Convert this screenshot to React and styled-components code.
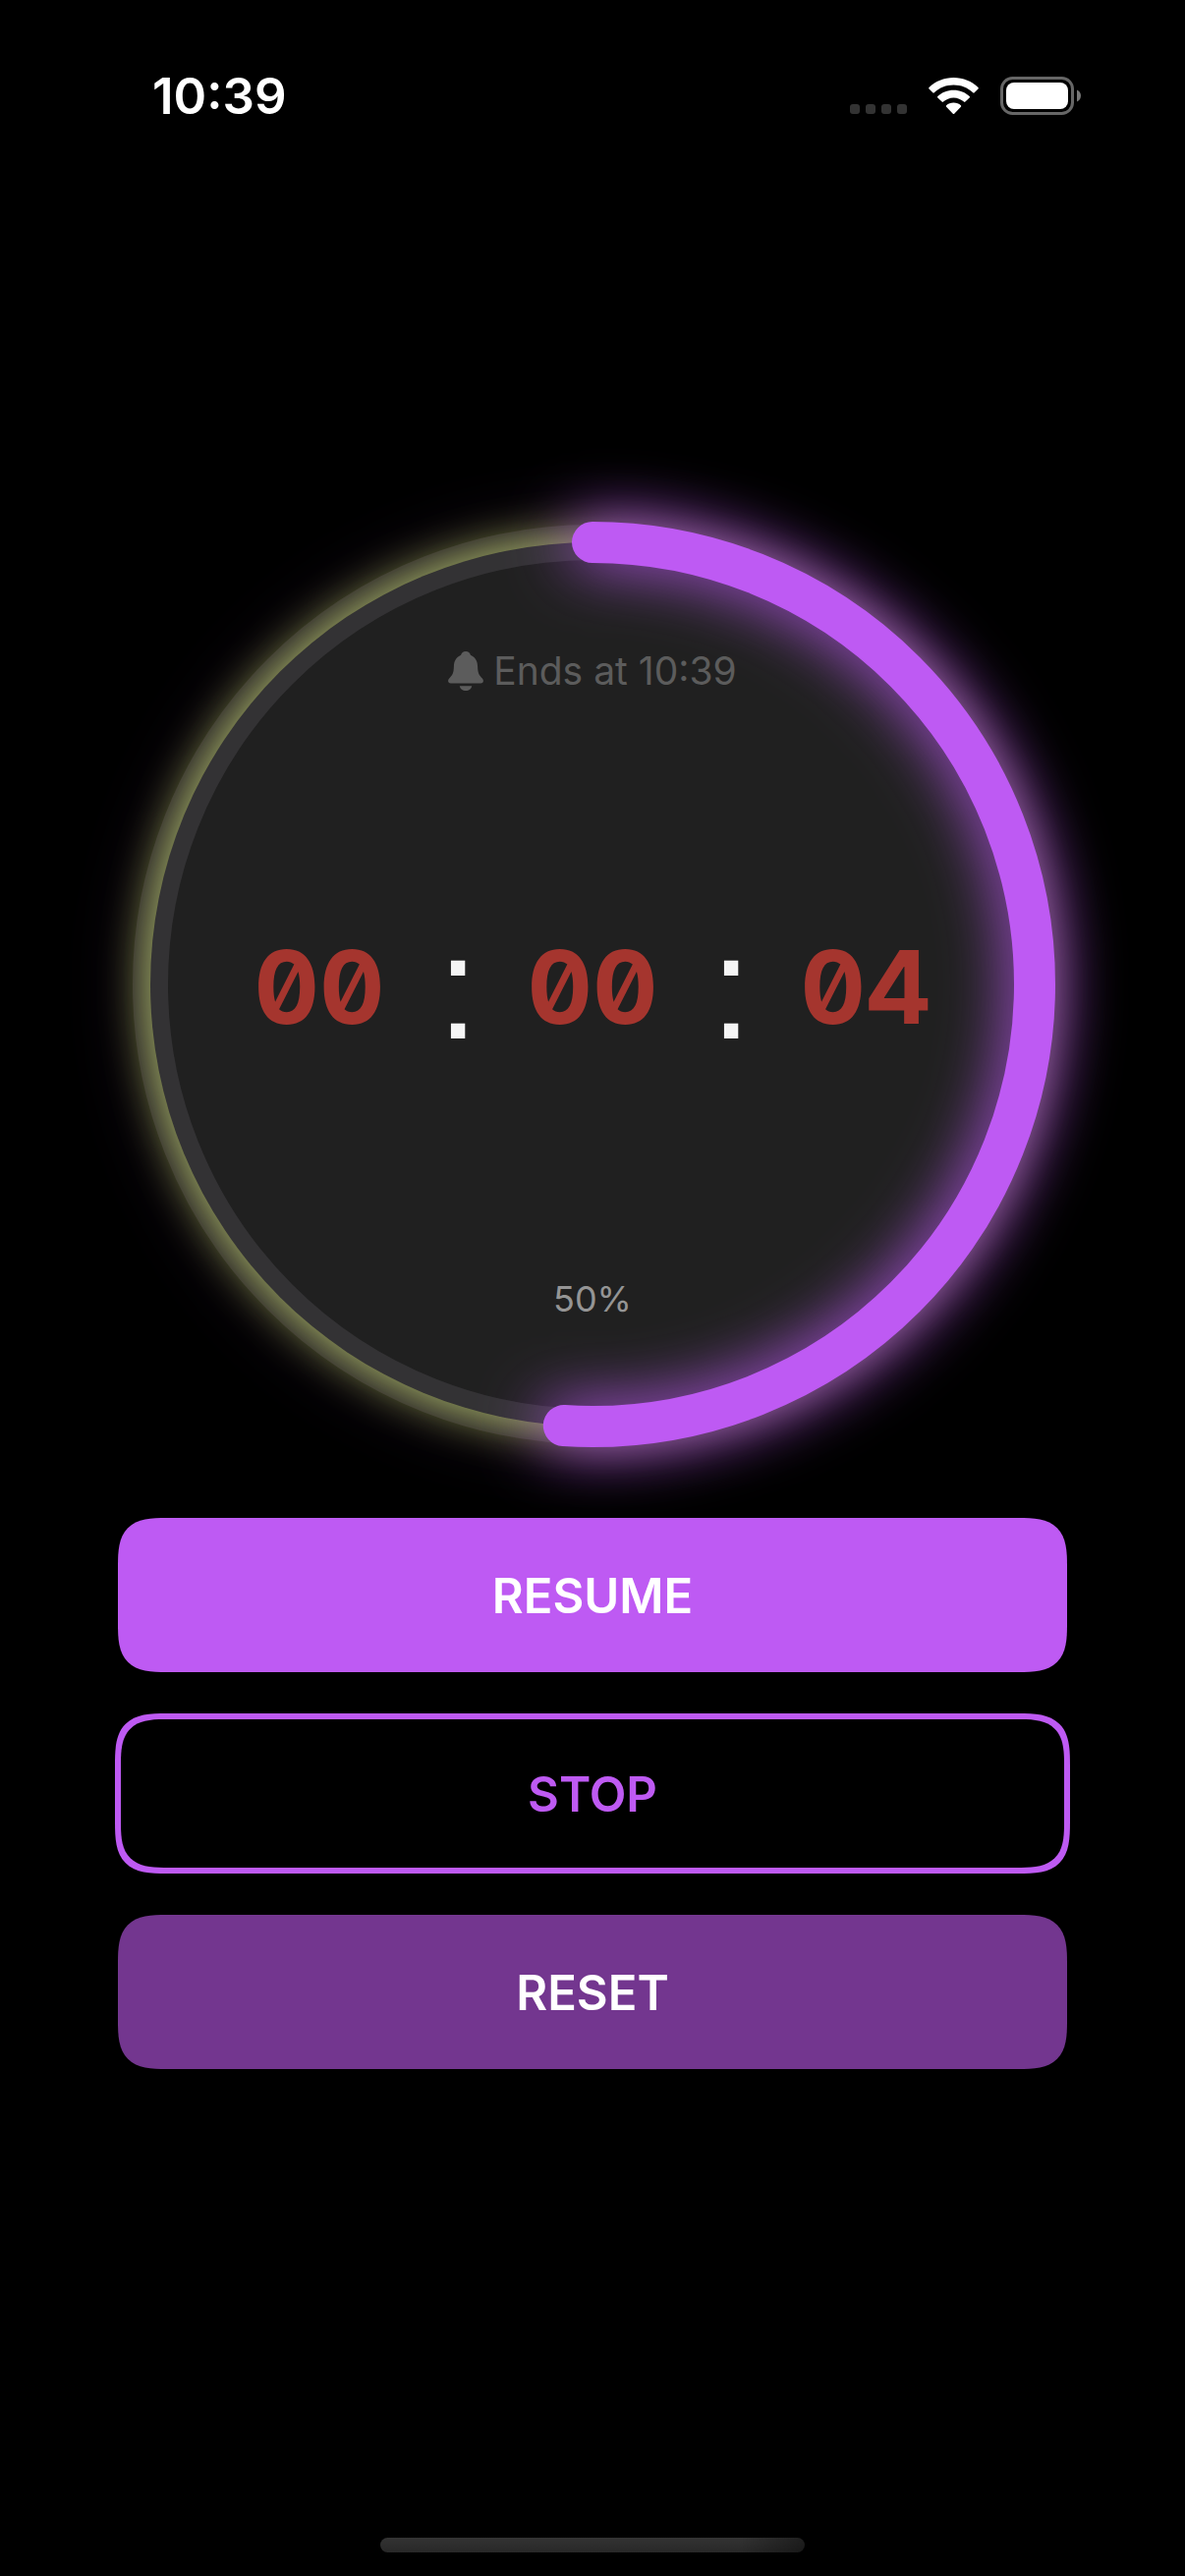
import React from "react";
import styled, { createGlobalStyle } from "styled-components";

const purple = "#be5af3";
const sans = `Inter, "Liberation Sans", sans-serif`;

const GlobalStyle = createGlobalStyle`
  *, *::before, *::after { box-sizing: border-box; }
  html, body { margin: 0; background: #000; }
  body { font-family: ${sans}; color: #fff; }
`;

const Screen = styled.div`
  min-height: 100vh;
  display: flex;
  flex-direction: column;
  background: #000;
  overflow: hidden;
`;

const StatusBar = styled.header`
  display: flex;
  align-items: center;
  justify-content: space-between;
  padding: 68px 106px 0 155px;
`;

const Clock = styled.time`
  font-size: 51px;
  line-height: 60px;
  font-weight: 600;
`;

const StatusIcons = styled.div`
  display: flex;
  align-items: flex-end;
  gap: 22px;

  svg { display: block; }
`;

const Main = styled.main`
  flex: 1;
  display: flex;
  flex-direction: column;
  gap: 72px;
  padding: 403px 120px 0;
`;

const Dial = styled.section`
  display: grid;
  margin: 0 12px;
  aspect-ratio: 1;

  > * { grid-area: 1 / 1; }
`;

const Ring = styled.svg`
  display: block;
  width: 100%;
  height: 100%;
  overflow: visible;
`;

const DialContent = styled.div`
  display: flex;
  flex-direction: column;
  align-items: center;
  justify-content: space-between;
  padding: 128px 0 127px;
  z-index: 1;
`;

const EndsAt = styled.p`
  display: flex;
  align-items: center;
  gap: 10px;
  margin: 0;
  font-size: 39px;
  line-height: 48px;
  color: #5c5c5c;
`;

const Percent = styled.p`
  margin: 0;
  font-size: 36px;
  line-height: 48px;
  color: #959595;
`;

const Countdown = styled.div`
  display: grid;
  grid-template-columns: 132px 146px 132px 146px 132px;
  align-items: center;
  justify-items: center;
  padding-top: 4px;
  line-height: 120px;
`;

const Digits = styled.span`
  font-size: 103px;
  font-weight: 700;
  font-feature-settings: "tnum", "zero";
  color: #a5352e;
`;

const Colon = styled.span`
  padding-left: 4px;
  font-family: "Liberation Sans", Arial, sans-serif;
  font-size: 150px;
  color: #f5f5f5;
`;

const Actions = styled.div`
  display: flex;
  flex-direction: column;
  gap: 45px;
`;

const ActionButton = styled.button`
  height: 157px;
  padding: 2px 0 0;
  border: 0;
  border-radius: 38px;
  background: ${(p) => p.$fill || "transparent"};
  color: ${(p) => p.$ink || "#fff"};
  outline: ${(p) => (p.$outlined ? `6px solid ${purple}` : "none")};
  outline-offset: -3px;
  font-family: inherit;
  font-size: 49px;
  line-height: 60px;
  font-weight: 600;

  @supports (corner-shape: superellipse(1.6)) {
    border-radius: 50px;
    corner-shape: superellipse(1.6);
  }
`;

const HomeBar = styled.footer`
  display: flex;
  justify-content: center;
  padding-bottom: 24px;

  &::after {
    content: "";
    width: 432px;
    height: 15px;
    border-radius: 8px;
    background:
      linear-gradient(90deg, transparent 85%, rgba(0, 0, 0, 0.4)),
      linear-gradient(#333, #282828);
  }
`;

const PROGRESS = 0.5103;
const R = 450;
const LENGTH = 2 * Math.PI * R;

function ProgressRing() {
  return (
    <Ring viewBox="0 0 942 942" aria-hidden="true">
      <defs>
        <filter id="soft" x="-200" y="-200" width="1342" height="1342" filterUnits="userSpaceOnUse" colorInterpolationFilters="sRGB">
          <feGaussianBlur stdDeviation="25" />
        </filter>
        <filter id="glow" x="-200" y="-200" width="1342" height="1342" filterUnits="userSpaceOnUse" colorInterpolationFilters="sRGB">
          <feGaussianBlur stdDeviation="32" />
        </filter>
      </defs>
      <circle cx="471" cy="471" r={R} fill="#c8e85c" filter="url(#soft)" />
      <circle cx="471" cy="471" r={R} fill="none" stroke={purple} strokeOpacity="0.16" strokeWidth="36" filter="url(#glow)" />
      <circle cx="471" cy="471" r={R} fill="#202020" />
      <circle cx="471" cy="471" r={R} fill="none" stroke="#aca4b2" strokeOpacity="0.14" strokeWidth="36" />
      <g transform="rotate(-90 471 471)" fill="none" stroke={purple} strokeWidth="42" strokeLinecap="round">
        <circle cx="471" cy="471" r={R} strokeDasharray={`${LENGTH * PROGRESS} ${LENGTH}`} filter="url(#glow)" />
        <circle cx="471" cy="471" r={R} strokeDasharray={`${LENGTH * PROGRESS} ${LENGTH}`} />
      </g>
    </Ring>
  );
}

function CellularIcon() {
  return (
    <svg width="58" height="12" viewBox="0 0 58 12" fill="#333" aria-hidden="true">
      {[0, 16, 32, 48].map((x) => (
        <rect key={x} x={x} y="0" width="10" height="10" rx="3" />
      ))}
    </svg>
  );
}

function WifiIcon() {
  return (
    <svg width="51" height="39" viewBox="0 0 51 39" fill="#fff" aria-hidden="true">
      <path d="M25.500 0C35.200 0 44.200 3.700 50.500 10Q51.200 10.800 50.500 11.500L46.700 15.300Q46 16 45.200 15.300C39.900 10.300 32.900 7.600 25.500 7.600S11.100 10.300 5.800 15.300Q5 16 4.300 15.300L.5 11.500Q-.2 10.800 .5 10C6.800 3.700 15.800 0 25.500 0Z" />
      <path d="M25.500 12.700C31.800 12.700 37.600 15 41.700 19Q42.400 19.700 41.700 20.400L37.400 24.600Q36.700 25.200 36 24.600C33.200 22 29.500 20.400 25.500 20.400S17.800 22 15 24.600Q14.300 25.200 13.600 24.600L9.300 20.400Q8.600 19.700 9.300 19C13.400 15 19.200 12.700 25.500 12.700Z" />
      <path d="M25.500 25.500C28.400 25.500 31 26.500 32.900 28.300Q33.600 29 32.900 29.700L26.200 36.700Q25.500 37.400 24.800 36.700L18.100 29.700Q17.400 29 18.100 28.300C20 26.500 22.600 25.500 25.500 25.500Z" />
    </svg>
  );
}

function BatteryIcon() {
  return (
    <svg width="82" height="40" viewBox="0 0 82 40" aria-hidden="true">
      <rect x="1.500" y="1.500" width="72" height="36" rx="11" fill="none" stroke="#666" strokeWidth="3" />
      <rect x="6" y="6" width="63" height="27" rx="8" fill="#fff" />
      <path d="M78 13.500C80.400 14.500 82 16.800 82 19.500S80.400 24.500 78 25.500Z" fill="#777" />
    </svg>
  );
}

function BellIcon() {
  return (
    <svg width="36" height="40" viewBox="0 0 36 40" fill="#5c5c5c" aria-hidden="true">
      <path d="M18 0C20.500 0 22.300 1.500 22.900 3.800C27.800 6 30.100 10.400 30.100 15.600C30.300 22.200 31.500 24.200 34.800 27.500C36.800 29.700 36 32.500 33.300 32.500H2.700C0 32.500-.8 29.700 1.200 27.500C4.500 24.200 5.700 22.200 5.900 15.600C5.900 10.400 8.200 6 13.100 3.800C13.700 1.500 15.500 0 18 0Z" />
      <path d="M11.800 35.200H24.200C23.800 38 21.300 40 18 40S12.200 38 11.800 35.200Z" />
    </svg>
  );
}

export default function App() {
  return (
    <Screen>
      <GlobalStyle />
      <StatusBar>
        <Clock>10:39</Clock>
        <StatusIcons>
          <CellularIcon />
          <WifiIcon />
          <BatteryIcon />
        </StatusIcons>
      </StatusBar>
      <Main>
        <Dial>
          <ProgressRing />
          <DialContent>
            <EndsAt>
              <BellIcon />
              Ends at 10:39
            </EndsAt>
            <Countdown role="timer">
              <Digits>00</Digits>
              <Colon>:</Colon>
              <Digits>00</Digits>
              <Colon>:</Colon>
              <Digits>04</Digits>
            </Countdown>
            <Percent>50%</Percent>
          </DialContent>
        </Dial>
        <Actions>
          <ActionButton type="button" $fill={purple}>RESUME</ActionButton>
          <ActionButton type="button" $outlined $ink={purple}>STOP</ActionButton>
          <ActionButton type="button" $fill="#73368f">RESET</ActionButton>
        </Actions>
      </Main>
      <HomeBar />
    </Screen>
  );
}
